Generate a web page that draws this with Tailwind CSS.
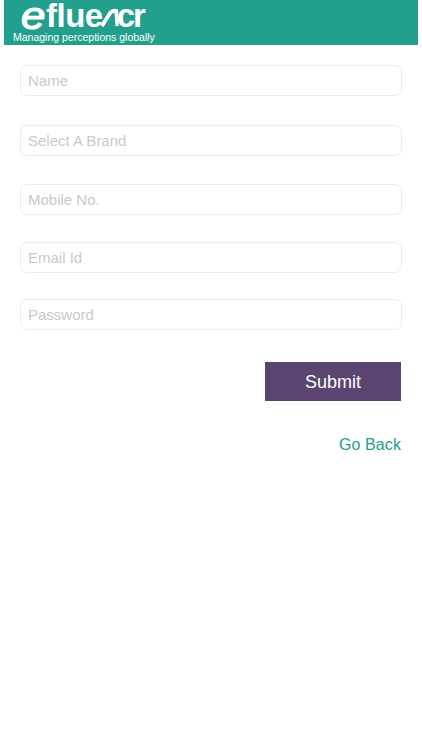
<!DOCTYPE html>
<html lang="en">

<head>
  <meta charset="UTF-8">
  <meta name="viewport" content="width=device-width, initial-scale=1.0">
  <title>Efluencr Register</title>
  <script src="https://cdn.jsdelivr.net/npm/@tailwindcss/browser@4"></script>
</head>

<body class="bg-white h-[750px] w-[422px] overflow-hidden font-['Liberation_Sans',Arial,sans-serif]">

  <!-- Header -->
  <div class="ml-[4px] w-[414px] h-[45px] bg-[#23a08d] pl-[9px] flex flex-col">
    <div class="h-[31px] pl-[8px] flex items-end text-white font-bold">
      <span class="text-[38px] leading-[30px] italic font-normal [-webkit-text-stroke:1.2px_white] w-[24px] scale-x-115 origin-left">e</span>
      <span class="text-[33px] leading-[30px] tracking-[-0.5px] ml-[1px]">flue</span>
      <svg width="18" height="21" viewBox="0 0 20 21" preserveAspectRatio="none" class="mb-[3px] -ml-[2px] shrink-0">
        <path d="M1 19 L10 6 Q13 3 17 4 L18 19" fill="none" stroke="#fff" stroke-width="4"/>
      </svg>
      <span class="text-[33px] leading-[30px] tracking-[-2px] -ml-[2px]">cr</span>
    </div>
    <div class="text-white text-[10.5px] leading-[13px]">Managing perceptions globally</div>
  </div>

  <!-- Form -->
  <form class="ml-[20px] w-[382px] mt-[20px] flex flex-col" onsubmit="event.preventDefault()">
    <input type="text" placeholder="Name"
      class="h-[31px] border border-[#ececec] rounded-[7px] px-[7px] text-[15px] placeholder:text-[#c9c9cd] outline-none">
    <input type="text" placeholder="Select A Brand"
      class="h-[31px] mt-[29px] border border-[#ececec] rounded-[7px] px-[7px] text-[15px] placeholder:text-[#c9c9cd] outline-none">
    <input type="text" placeholder="Mobile No."
      class="h-[31px] mt-[28px] border border-[#ececec] rounded-[7px] px-[7px] text-[15px] placeholder:text-[#c9c9cd] outline-none">
    <input type="text" placeholder="Email Id"
      class="h-[31px] mt-[27px] border border-[#ececec] rounded-[7px] px-[7px] text-[15px] placeholder:text-[#c9c9cd] outline-none">
    <input type="password" placeholder="Password"
      class="h-[31px] mt-[26px] border border-[#ececec] rounded-[7px] px-[7px] text-[15px] placeholder:text-[#c9c9cd] outline-none">

    <div class="mt-[32px] pr-[1px] flex flex-col items-end">
      <button type="submit" class="w-[136px] h-[39px] pt-[1px] bg-[#5a4570] text-white text-[18px]">Submit</button>
      <a href="#" class="mt-[34px] text-[#23a08d] text-[16px] leading-[20px] tracking-[0.1px]">Go Back</a>
    </div>
  </form>

</body>

</html>
